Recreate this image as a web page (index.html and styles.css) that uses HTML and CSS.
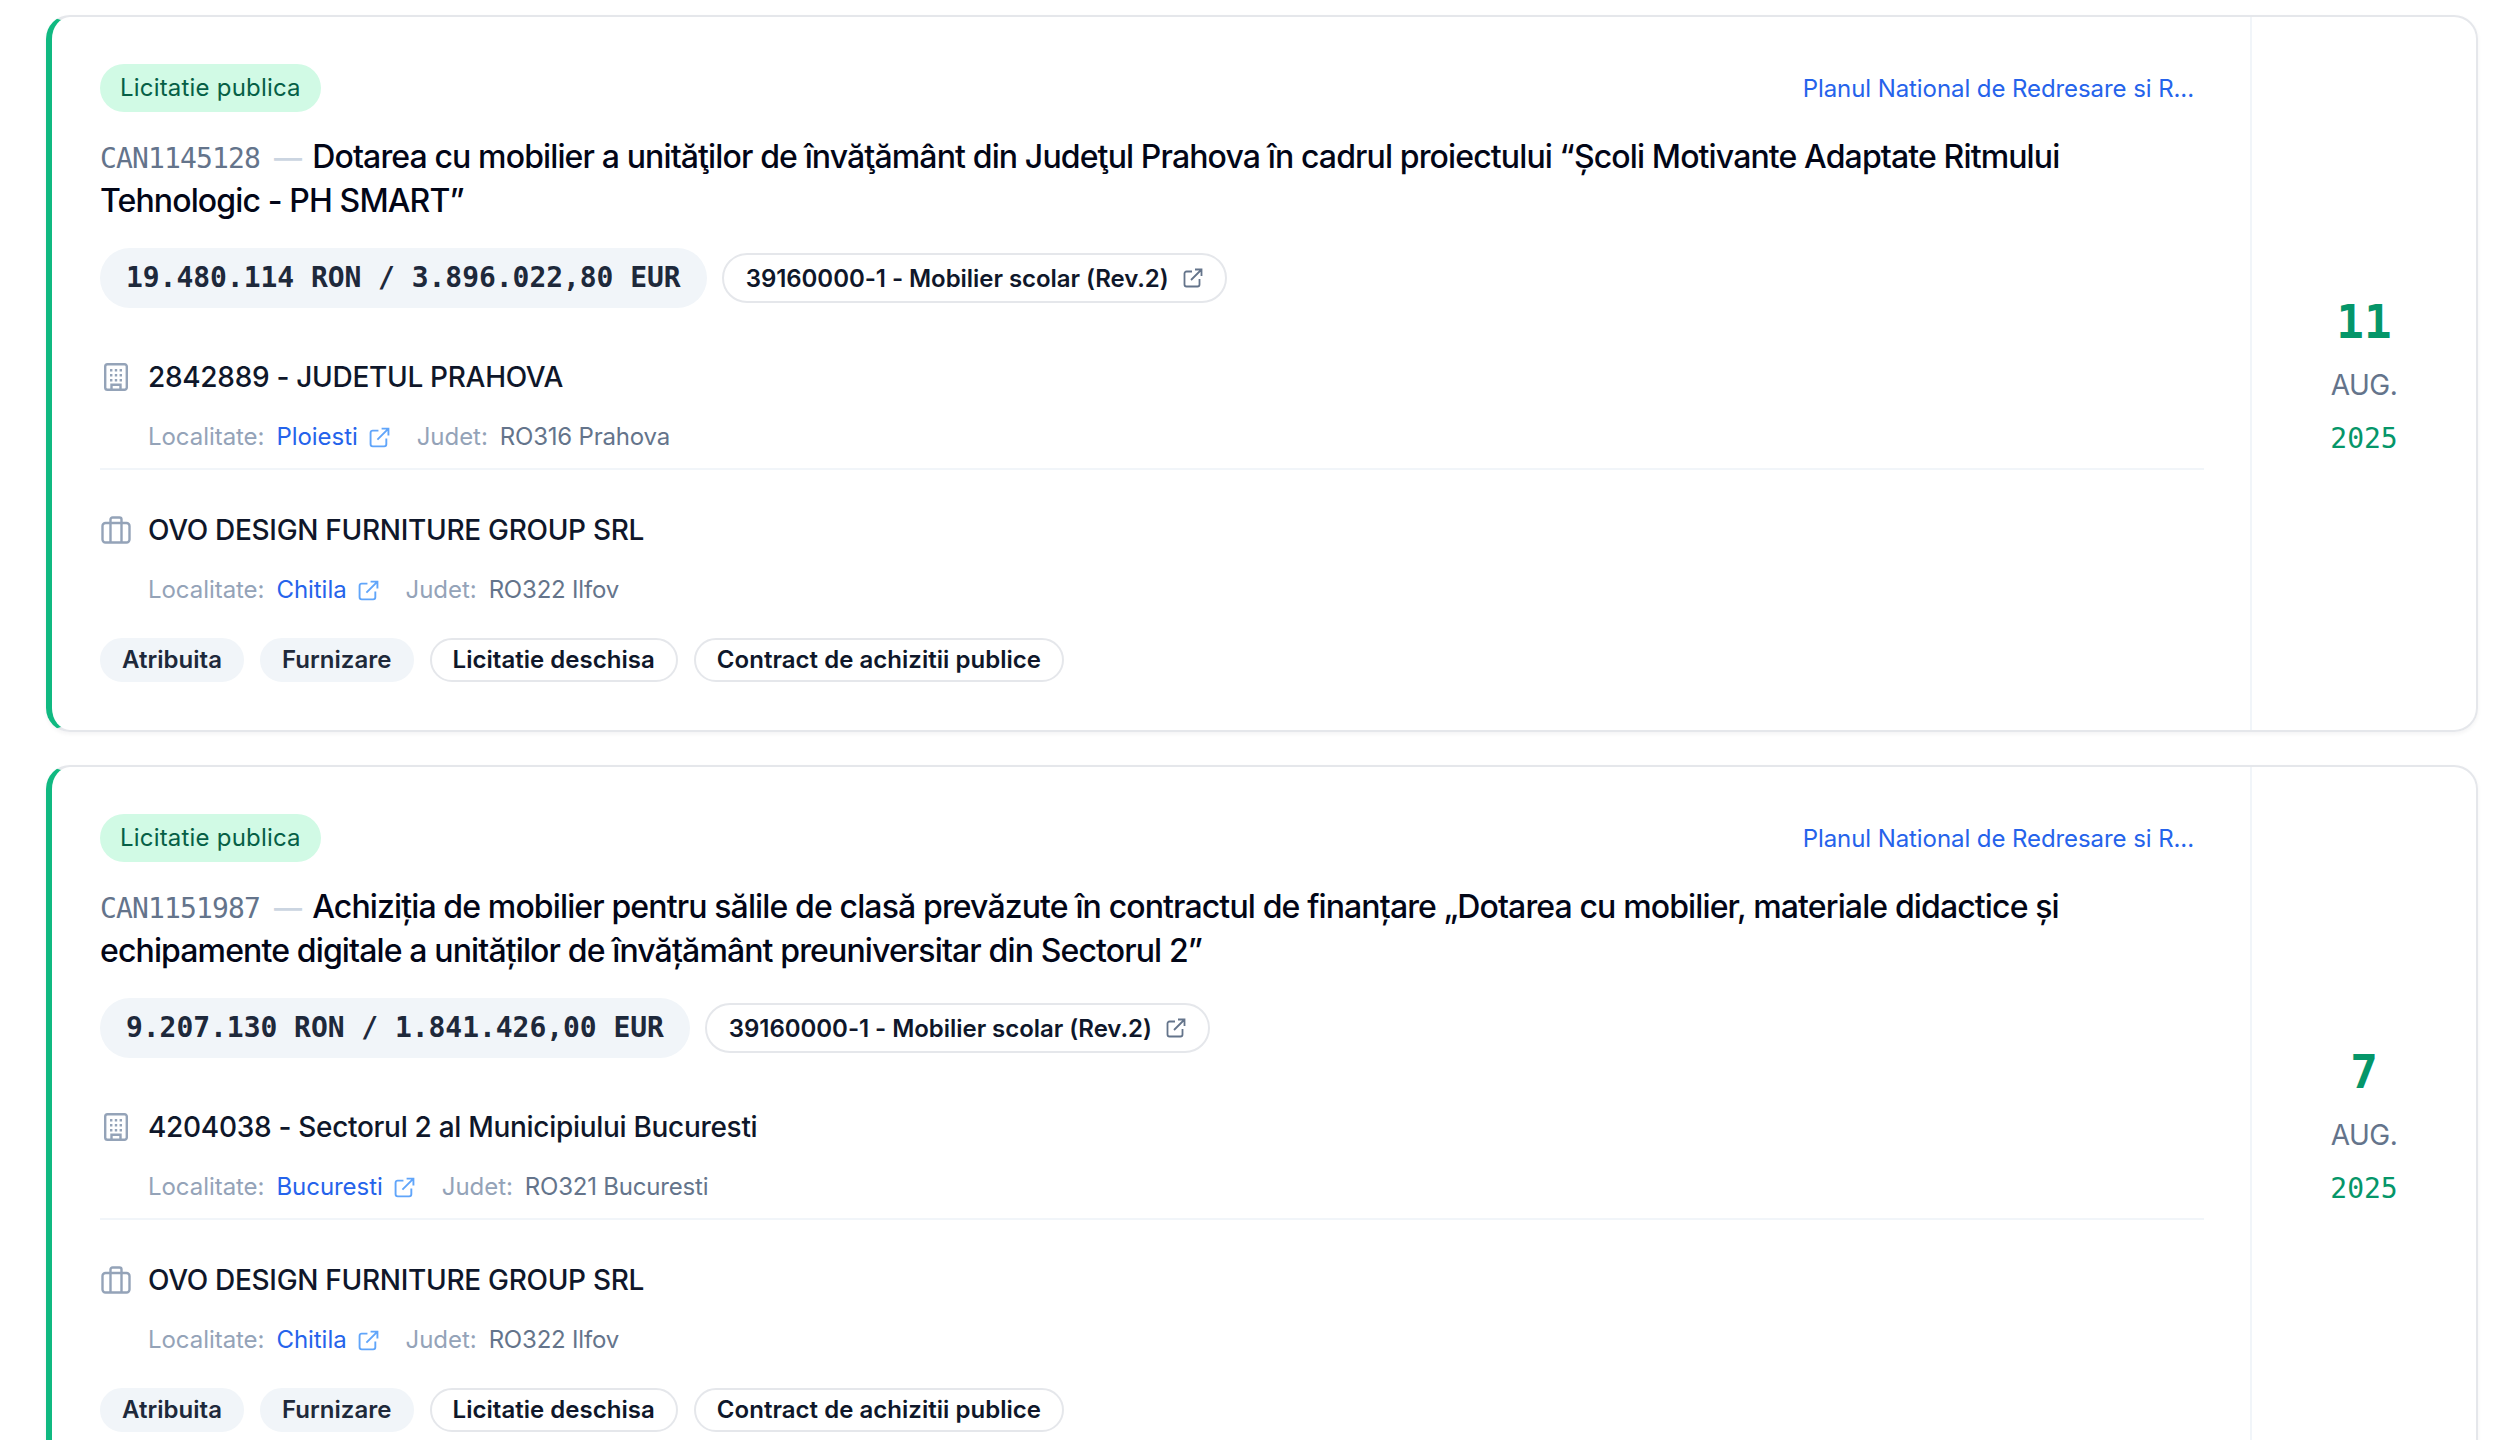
FILE: index.html
```html
<!DOCTYPE html>
<html lang="en">

<head>
    <meta charset="UTF-8">
    <title>Licitatii</title>
    <link rel="stylesheet" href="styles.css">
</head>

<body>
    <svg class="defs" width="0" height="0">
        <symbol id="i-ext" viewBox="0 0 20 20">
            <path d="M9 3.500H3.500a2 2 0 0 0-2 2v11a2 2 0 0 0 2 2h11a2 2 0 0 0 2-2V11M8 12 18 2M12 1.500h6.500V8" fill="none" stroke="currentColor" stroke-width="1.800"/>
        </symbol>
        <symbol id="i-building" viewBox="0 0 24 28">
            <path d="M3.500 1.200h17a2.300 2.300 0 0 1 2.300 2.300v21a2.300 2.300 0 0 1-2.300 2.300h-17a2.300 2.300 0 0 1-2.300-2.300v-21a2.300 2.300 0 0 1 2.300-2.300ZM7.500 26.800v-5h9v5" fill="none" stroke="currentColor" stroke-width="2.400"/>
            <path d="M6 6h2.400v2.400H6zM10.800 6h2.400v2.400h-2.400zM15.600 6H18v2.400h-2.400zM6 11h2.400v2.400H6zM10.800 11h2.400v2.400h-2.400zM15.600 11H18v2.400h-2.400zM6 16h2.400v2.400H6zM10.800 16h2.400v2.400h-2.400zM15.600 16H18v2.400h-2.400z" fill="currentColor"/>
        </symbol>
        <symbol id="i-case" viewBox="0 0 30 28">
            <path d="M4.500 7h21a3 3 0 0 1 3 3v13.500a3 3 0 0 1-3 3h-21a3 3 0 0 1-3-3V10a3 3 0 0 1 3-3ZM9.500 7v19.500M20.500 7v19.500M9.500 7V3.500a2 2 0 0 1 2-2h7a2 2 0 0 1 2 2V7" fill="none" stroke="currentColor" stroke-width="2.400"/>
        </symbol>
    </svg>

    <div class="list">
        <article class="card">
            <div class="main">
                <div class="top">
                    <span class="procedure">Licitatie publica</span>
                    <a class="program">Planul National de Redresare si R...</a>
                </div>
                <h2 class="title"><span class="code">CAN1145128</span><span class="dash">—</span>Dotarea cu mobilier a unităţilor de învăţământ din Judeţul Prahova în cadrul proiectului “Școli Motivante Adaptate Ritmului Tehnologic - PH SMART”</h2>
                <div class="values">
                    <span class="amount">19.480.114 RON / 3.896.022,80 EUR</span>
                    <a class="cpv">39160000-1 - Mobilier scolar (Rev.2)<svg class="ext-cpv"><use href="#i-ext"/></svg></a>
                </div>
                <section class="party bordered">
                    <div class="party-name"><svg class="ico-building"><use href="#i-building"/></svg>2842889 - JUDETUL PRAHOVA</div>
                    <div class="party-meta">
                        <span class="lbl">Localitate:</span><a class="city">Ploiesti<svg class="ext"><use href="#i-ext"/></svg></a>
                        <span class="lbl">Judet:</span><span class="val">RO316 Prahova</span>
                    </div>
                </section>
                <section class="party">
                    <div class="party-name"><svg class="ico-case"><use href="#i-case"/></svg>OVO DESIGN FURNITURE GROUP SRL</div>
                    <div class="party-meta">
                        <span class="lbl">Localitate:</span><a class="city">Chitila<svg class="ext"><use href="#i-ext"/></svg></a>
                        <span class="lbl">Judet:</span><span class="val">RO322 Ilfov</span>
                    </div>
                </section>
                <div class="tags">
                    <span class="tag filled">Atribuita</span>
                    <span class="tag filled">Furnizare</span>
                    <span class="tag">Licitatie deschisa</span>
                    <span class="tag">Contract de achizitii publice</span>
                </div>
            </div>
            <aside class="date">
                <div class="day">11</div>
                <div class="month">AUG.</div>
                <div class="year">2025</div>
            </aside>
        </article>

        <article class="card">
            <div class="main">
                <div class="top">
                    <span class="procedure">Licitatie publica</span>
                    <a class="program">Planul National de Redresare si R...</a>
                </div>
                <h2 class="title"><span class="code">CAN1151987</span><span class="dash">—</span>Achiziția de mobilier pentru sălile de clasă prevăzute în contractul de finanțare „Dotarea cu mobilier, materiale didactice și echipamente digitale a unităților de învățământ preuniversitar din Sectorul 2”</h2>
                <div class="values">
                    <span class="amount">9.207.130 RON / 1.841.426,00 EUR</span>
                    <a class="cpv">39160000-1 - Mobilier scolar (Rev.2)<svg class="ext-cpv"><use href="#i-ext"/></svg></a>
                </div>
                <section class="party bordered">
                    <div class="party-name"><svg class="ico-building"><use href="#i-building"/></svg>4204038 - Sectorul 2 al Municipiului Bucuresti</div>
                    <div class="party-meta">
                        <span class="lbl">Localitate:</span><a class="city">Bucuresti<svg class="ext"><use href="#i-ext"/></svg></a>
                        <span class="lbl">Judet:</span><span class="val">RO321 Bucuresti</span>
                    </div>
                </section>
                <section class="party">
                    <div class="party-name"><svg class="ico-case"><use href="#i-case"/></svg>OVO DESIGN FURNITURE GROUP SRL</div>
                    <div class="party-meta">
                        <span class="lbl">Localitate:</span><a class="city">Chitila<svg class="ext"><use href="#i-ext"/></svg></a>
                        <span class="lbl">Judet:</span><span class="val">RO322 Ilfov</span>
                    </div>
                </section>
                <div class="tags">
                    <span class="tag filled">Atribuita</span>
                    <span class="tag filled">Furnizare</span>
                    <span class="tag">Licitatie deschisa</span>
                    <span class="tag">Contract de achizitii publice</span>
                </div>
            </div>
            <aside class="date">
                <div class="day">7</div>
                <div class="month">AUG.</div>
                <div class="year">2025</div>
            </aside>
        </article>
    </div>
</body>

</html>
```

FILE: styles.css
```css
html, body {
    margin: 0;
    height: 100%;
    overflow: hidden;
    background: #fff;
    font-family: Inter, sans-serif;
    color: #0f172a;
}

.defs {
    display: block;
    height: 0;
}

.list {
    display: flex;
    flex-direction: column;
    gap: 33px;
    padding: 15px 26px 0 46px;
}

.card {
    display: flex;
    flex: none;
    height: 717px;
    box-sizing: border-box;
    border: 2px solid #e5e7eb;
    border-left: 6px solid #10b981;
    border-radius: 24px;
    box-shadow: 0 2px 4px rgba(15, 23, 42, 0.05);
}

.main {
    flex: 1;
    min-width: 0;
    padding: 47px 46px 0 48px;
    border-right: 2px solid #f1f5f9;
}

.top {
    display: flex;
    justify-content: space-between;
    align-items: center;
}

.procedure {
    height: 48px;
    line-height: 48px;
    padding: 0 20px;
    border-radius: 24px;
    background: #d1fae5;
    color: #065f46;
    font-size: 24px;
    letter-spacing: 0.2px;
}

.program {
    margin-right: 10px;
    color: #2563eb;
    font-size: 24px;
    letter-spacing: -0.08px;
}

.title {
    margin: 23px 0 0;
    font-size: 32px;
    line-height: 44px;
    font-weight: 500;
    letter-spacing: -0.87px;
    color: #020617;
}

.code {
    font-family: "DejaVu Sans Mono", monospace;
    font-size: 28px;
    line-height: 0;
    font-weight: 400;
    letter-spacing: -0.85px;
    color: #64748b;
}

.dash {
    margin: 0 11px 0 14px;
    font-size: 28px;
    line-height: 0;
    color: #cbd5e1;
    font-weight: 500;
}

.values {
    display: flex;
    align-items: center;
    gap: 15px;
    margin-top: 25px;
}

.amount {
    height: 60px;
    line-height: 60px;
    padding: 0 26px;
    border-radius: 30px;
    background: #f1f5f9;
    font-family: "DejaVu Sans Mono", monospace;
    font-size: 28px;
    letter-spacing: -0.05px;
    font-weight: 700;
    color: #1e293b;
}

.cpv {
    display: flex;
    align-items: center;
    height: 50px;
    box-sizing: border-box;
    padding: 0 22px;
    border: 2px solid #e5e7eb;
    border-radius: 25px;
    font-size: 24px;
    font-weight: 600;
    letter-spacing: -0.05px;
}

.ext-cpv {
    width: 20px;
    height: 20px;
    margin-left: 14px;
    color: #64748b;
}

.party {
    margin-top: 49px;
}

.party.bordered {
    padding-bottom: 15px;
    border-bottom: 2px solid #f1f5f9;
}

.party + .party {
    margin-top: 40px;
}

.party-name {
    display: flex;
    align-items: center;
    font-size: 28px;
    line-height: 40px;
    letter-spacing: -0.3px;
    font-weight: 500;
}

.ico-building,
.ico-case {
    flex: none;
    color: #94a3b8;
}

.ico-building {
    width: 24px;
    height: 28px;
    margin: 0 20px 0 4px;
}

.ico-case {
    width: 30px;
    height: 28px;
    margin: 0 17px 0 1px;
}

.party-meta {
    display: flex;
    align-items: center;
    margin: 24px 0 0 48px;
    font-size: 24px;
    line-height: 32px;
    letter-spacing: -0.05px;
}

.lbl {
    margin-right: 12px;
    color: #94a3b8;
}

.city {
    display: flex;
    align-items: center;
    margin-right: 27px;
    color: #2563eb;
}

.ext {
    width: 21px;
    height: 21px;
    margin-left: 11px;
    color: #60a5fa;
}

.val {
    letter-spacing: -0.2px;
    color: #64748b;
}

.tags {
    display: flex;
    gap: 16px;
    margin-top: 32px;
}

.tag {
    height: 44px;
    line-height: 40px;
    box-sizing: border-box;
    padding: 0 21px;
    border: 2px solid #e5e7eb;
    border-radius: 22px;
    font-size: 24px;
    font-weight: 600;
    letter-spacing: 0.03px;
}

.tag.filled {
    padding: 0 20px;
    border-color: #f1f5f9;
    background: #f1f5f9;
    color: #1e293b;
}

.date {
    display: flex;
    flex: none;
    flex-direction: column;
    align-items: center;
    justify-content: center;
    width: 224px;
    box-sizing: border-box;
    padding-top: 3px;
    text-align: center;
}

.day {
    font-family: "DejaVu Sans Mono", monospace;
    font-size: 46px;
    line-height: 60px;
    font-weight: 700;
    color: #059669;
}

.month {
    margin-top: 13px;
    font-size: 28px;
    line-height: 40px;
    letter-spacing: -0.5px;
    color: #64748b;
}

.year {
    margin-top: 14px;
    font-family: "DejaVu Sans Mono", monospace;
    font-size: 28px;
    line-height: 40px;
    color: #059669;
}
```
